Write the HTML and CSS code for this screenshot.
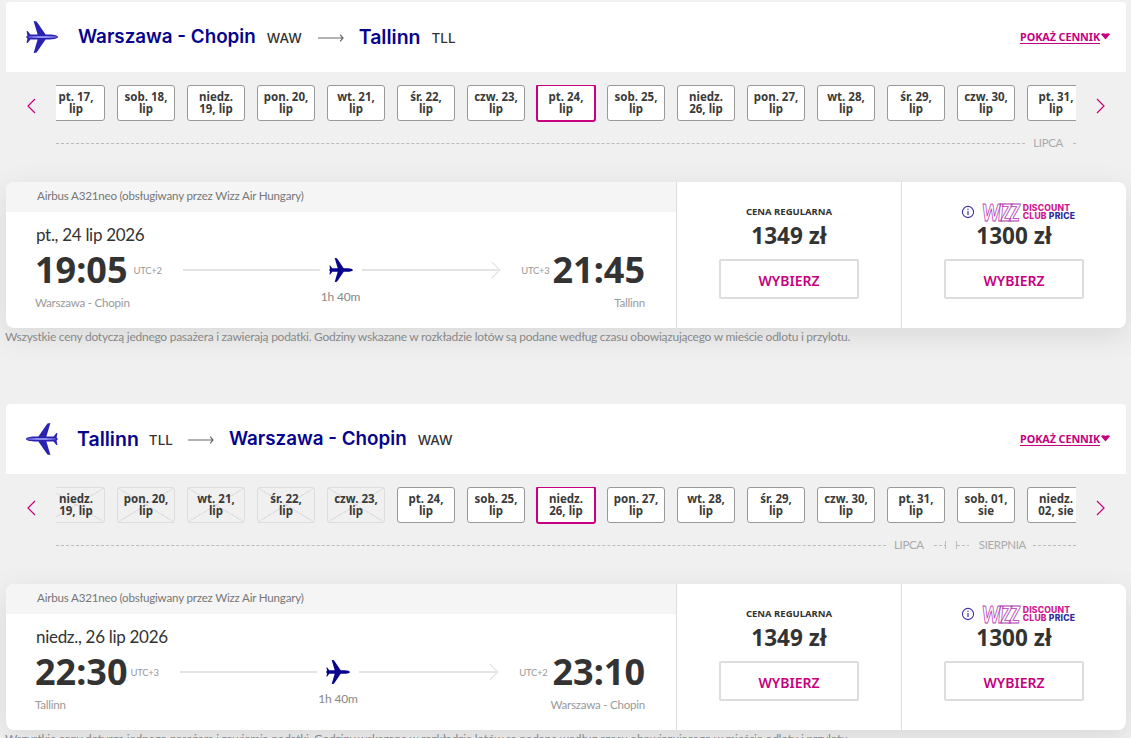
FILE: index.html
```html
<!DOCTYPE html>
<html lang="pl">
<head>
<meta charset="utf-8">
<title>Wizz Air</title>
<link rel="stylesheet" href="styles.css">
</head>
<body>
<svg class="defs" width="0" height="0" aria-hidden="true">
  <defs>
    <path id="plane" d="M32 16C32 14.8 28 13.6 24 13.6L19.6 13.6 10.6 0.4 7.6 0 11.6 13.6 4.4 13.6 1.6 10 0.6 10 1.4 14.4 0 16 1.4 17.6 0.6 22 1.6 22 4.4 18.4 11.6 18.4 7.6 32 10.6 31.6 19.6 18.4 24 18.4C28 18.4 32 17.2 32 16Z"/>
    <symbol id="plane-big" viewBox="0 0 32 32">
      <use href="#plane" fill="#2a22b0"/>
      <path d="M1.5 16C6 14.8 24 14.6 32 16 24 17.4 6 17.2 1.5 16Z" fill="#8f8cf0"/>
    </symbol>
    <symbol id="plane-big-left" viewBox="0 0 32 32">
      <g transform="matrix(-1 0 0 1 32 0)">
        <use href="#plane" fill="#2a22b0"/>
        <path d="M1.5 16C6 14.8 24 14.6 32 16 24 17.4 6 17.2 1.5 16Z" fill="#8f8cf0"/>
      </g>
    </symbol>
    <symbol id="plane-small" viewBox="0 0 32 32"><use href="#plane" fill="#06038d"/></symbol>
    <symbol id="chev-left" viewBox="0 0 10 16"><path d="M9 1 2 8l7 7" fill="none" stroke="#c6007e" stroke-width="1.2"/></symbol>
    <symbol id="chev-right" viewBox="0 0 10 16"><path d="M1 1l7 7-7 7" fill="none" stroke="#c6007e" stroke-width="1.2"/></symbol>
    <symbol id="route-arrow" viewBox="0 0 27 10"><path d="M0 5h26M23 1.5 26 5l-3 3.5" fill="none" stroke="#666" stroke-width="1.2"/></symbol>
    <symbol id="info" viewBox="0 0 14 14"><circle cx="7" cy="7" r="5.6" fill="none" stroke="#3d33a8" stroke-width="1.1"/><path d="M7 6v4M7 3.8v1.2" stroke="#3d33a8" stroke-width="1.2"/></symbol>
    <symbol id="drop" viewBox="0 0 9 7"><path d="M0 1.2C1 -.2 3.4 0 4.5 1 5.6 0 8 -.2 9 1.2L4.5 6.6Z" fill="#c6007e"/></symbol>
  </defs>
</svg>

<section class="leg">
  <header class="leg-head">
    <svg class="head-plane"><use href="#plane-big"/></svg>
    <span class="city">Warszawa - Chopin</span><span class="code">WAW</span>
    <svg class="route-arrow"><use href="#route-arrow"/></svg>
    <span class="city city-short">Tallinn</span><span class="code">TLL</span>
    <a class="fares" href="#"><span class="fares-text">POKAŻ CENNIK</span><svg class="drop"><use href="#drop"/></svg></a>
  </header>
  <div class="date-nav">
    <svg class="chev"><use href="#chev-left"/></svg>
    <div class="date-window">
      <div class="date-track">
        <div class="chip">pt. 17,<br>lip</div>
        <div class="chip">sob. 18,<br>lip</div>
        <div class="chip">niedz.<br>19, lip</div>
        <div class="chip">pon. 20,<br>lip</div>
        <div class="chip">wt. 21,<br>lip</div>
        <div class="chip">śr. 22,<br>lip</div>
        <div class="chip">czw. 23,<br>lip</div>
        <div class="chip chip-on">pt. 24,<br>lip</div>
        <div class="chip">sob. 25,<br>lip</div>
        <div class="chip">niedz.<br>26, lip</div>
        <div class="chip">pon. 27,<br>lip</div>
        <div class="chip">wt. 28,<br>lip</div>
        <div class="chip">śr. 29,<br>lip</div>
        <div class="chip">czw. 30,<br>lip</div>
        <div class="chip">pt. 31,<br>lip</div>
      </div>
      <div class="months">
        <span class="dash dash-fill"></span>
        <span class="month">LIPCA</span>
        <span class="dash dash-end"></span>
      </div>
    </div>
    <svg class="chev"><use href="#chev-right"/></svg>
  </div>
  <article class="card">
    <div class="flight">
      <div class="aircraft">Airbus A321neo (obsługiwany przez Wizz Air Hungary)</div>
      <div class="flight-body">
        <div class="flight-date">pt., 24 lip 2026</div>
        <div class="times">
          <div class="stop">
            <div class="time-row gap-6"><span class="time">19:05</span><span class="utc">UTC+2</span></div>
            <div class="place">Warszawa - Chopin</div>
          </div>
          <div class="mid">
            <div class="mid-row">
              <span class="mid-line"></span>
              <svg class="mid-plane"><use href="#plane-small"/></svg>
              <span class="mid-line mid-arrow"></span>
            </div>
            <div class="duration">1h 40m</div>
          </div>
          <div class="stop stop-end">
            <div class="time-row gap-3"><span class="utc">UTC+3</span><span class="time">21:45</span></div>
            <div class="place">Tallinn</div>
          </div>
        </div>
      </div>
    </div>
    <div class="fare">
      <div class="fare-label">CENA REGULARNA</div>
      <div class="fare-price">1349 zł</div>
      <button class="pick" type="button">WYBIERZ</button>
    </div>
    <div class="fare">
      <div class="fare-label fare-club">
        <svg class="info"><use href="#info"/></svg>
        <span class="wizz">WIZZ</span>
        <span class="club"><span class="club-a">DISCOUNT</span><span class="club-b">CLUB <b>PRICE</b></span></span>
      </div>
      <div class="fare-price">1300 zł</div>
      <button class="pick" type="button">WYBIERZ</button>
    </div>
  </article>
  <p class="note">Wszystkie ceny dotyczą jednego pasażera i zawierają podatki. Godziny wskazane w rozkładzie lotów są podane według czasu obowiązującego w mieście odlotu i przylotu.</p>
</section>

<section class="leg">
  <header class="leg-head">
    <svg class="head-plane head-plane-rev"><use href="#plane-big-left"/></svg>
    <span class="city city-short city-first">Tallinn</span><span class="code">TLL</span>
    <svg class="route-arrow"><use href="#route-arrow"/></svg>
    <span class="city">Warszawa - Chopin</span><span class="code">WAW</span>
    <a class="fares" href="#"><span class="fares-text">POKAŻ CENNIK</span><svg class="drop"><use href="#drop"/></svg></a>
  </header>
  <div class="date-nav">
    <svg class="chev"><use href="#chev-left"/></svg>
    <div class="date-window">
      <div class="date-track">
        <div class="chip chip-off">niedz.<br>19, lip</div>
        <div class="chip chip-off">pon. 20,<br>lip</div>
        <div class="chip chip-off">wt. 21,<br>lip</div>
        <div class="chip chip-off">śr. 22,<br>lip</div>
        <div class="chip chip-off">czw. 23,<br>lip</div>
        <div class="chip">pt. 24,<br>lip</div>
        <div class="chip">sob. 25,<br>lip</div>
        <div class="chip chip-on">niedz.<br>26, lip</div>
        <div class="chip">pon. 27,<br>lip</div>
        <div class="chip">wt. 28,<br>lip</div>
        <div class="chip">śr. 29,<br>lip</div>
        <div class="chip">czw. 30,<br>lip</div>
        <div class="chip">pt. 31,<br>lip</div>
        <div class="chip">sob. 01,<br>sie</div>
        <div class="chip">niedz.<br>02, sie</div>
      </div>
      <div class="months">
        <span class="dash dash-fill"></span>
        <span class="month">LIPCA</span>
        <span class="dash dash-tick-r"></span>
        <span class="dash dash-tick-l"></span>
        <span class="month">SIERPNIA</span>
        <span class="dash dash-tail"></span>
      </div>
    </div>
    <svg class="chev"><use href="#chev-right"/></svg>
  </div>
  <article class="card">
    <div class="flight">
      <div class="aircraft">Airbus A321neo (obsługiwany przez Wizz Air Hungary)</div>
      <div class="flight-body">
        <div class="flight-date">niedz., 26 lip 2026</div>
        <div class="times">
          <div class="stop">
            <div class="time-row gap-3"><span class="time">22:30</span><span class="utc">UTC+3</span></div>
            <div class="place">Tallinn</div>
          </div>
          <div class="mid">
            <div class="mid-row">
              <span class="mid-line"></span>
              <svg class="mid-plane"><use href="#plane-small"/></svg>
              <span class="mid-line mid-arrow"></span>
            </div>
            <div class="duration">1h 40m</div>
          </div>
          <div class="stop stop-end">
            <div class="time-row gap-5"><span class="utc">UTC+2</span><span class="time">23:10</span></div>
            <div class="place">Warszawa - Chopin</div>
          </div>
        </div>
      </div>
    </div>
    <div class="fare">
      <div class="fare-label">CENA REGULARNA</div>
      <div class="fare-price">1349 zł</div>
      <button class="pick" type="button">WYBIERZ</button>
    </div>
    <div class="fare">
      <div class="fare-label fare-club">
        <svg class="info"><use href="#info"/></svg>
        <span class="wizz">WIZZ</span>
        <span class="club"><span class="club-a">DISCOUNT</span><span class="club-b">CLUB <b>PRICE</b></span></span>
      </div>
      <div class="fare-price">1300 zł</div>
      <button class="pick" type="button">WYBIERZ</button>
    </div>
  </article>
  <p class="note">Wszystkie ceny dotyczą jednego pasażera i zawierają podatki. Godziny wskazane w rozkładzie lotów są podane według czasu obowiązującego w mieście odlotu i przylotu.</p>
</section>
</body>
</html>
```

FILE: styles.css
```css
* { box-sizing: border-box; }
html, body { height: 738px; overflow: hidden; }
body {
  margin: 0;
  padding: 2px 5px 0 6px;
  background: #f0f0f0;
  font-family: "Lato", "Liberation Sans", sans-serif;
  color: #333;
}
.defs { position: absolute; }
.leg { height: 402px; }

.leg-head {
  height: 70px;
  background: #fff;
  border-radius: 4px 4px 0 0;
  display: flex;
  align-items: center;
  padding: 0 16px 1px 20px;
}
.head-plane { width: 32px; height: 32px; margin: 1px 20px 0 0; }
.head-plane-rev { margin-right: 19px; }
.city { font-family: "Inter", sans-serif; font-weight: 600; font-size: 18.8px; color: #06038d; margin-right: 11px; }
.city-short { font-size: 19.5px; }
.city-first { margin-right: 10px; }
.code { font-family: "Inter", sans-serif; font-weight: 500; font-size: 13.5px; color: #333; margin-top: 3px; }
.route-arrow { width: 26px; height: 10px; margin: 2px 15px 0 16px; }
.city-first + .code + .route-arrow { margin-left: 15px; }
.fares { margin-left: auto; display: flex; align-items: center; gap: 1px; color: #c6007e; text-decoration: none; font: 700 10.8px "Noto Sans", sans-serif; letter-spacing: -.08px; }
.fares-text { border-bottom: 1px solid #c6007e; line-height: 13px; }
.drop { width: 9px; height: 7px; }

.date-nav { display: flex; height: 110px; padding-top: 13px; }
.chev { width: 10px; height: 16px; margin: 13px 0 0 20px; flex: none; }
.date-nav .chev:first-child { margin-right: 20px; }
.date-nav .chev:last-child { margin-left: 20px; }
.date-window { width: 1020px; flex: none; overflow: hidden; }
.date-track { display: flex; gap: 12px; margin-left: -9px; height: 38px; align-items: flex-start; }
.chip {
  width: 58px; height: 36px; flex: none;
  background: #fff;
  border: 1px solid #999;
  border-radius: 3px;
  font: 700 11.5px/12px "Noto Sans", sans-serif;
  color: #3a3a3a;
  text-align: center;
  display: flex; align-items: center; justify-content: center;
}
.chip-on {
  width: 60px; height: 38px;
  margin: -1px -1px 0;
  border: 2px solid #c6007e;
}
.chip-off {
  background:
    linear-gradient(to top right, transparent calc(50% - .5px), #ddd calc(50% - .5px), #ddd calc(50% + .5px), transparent calc(50% + .5px)),
    linear-gradient(to bottom right, transparent calc(50% - .5px), #ddd calc(50% - .5px), #ddd calc(50% + .5px), transparent calc(50% + .5px));
  border-color: #ddd;
}
.months { display: flex; align-items: center; height: 14px; margin-top: 13px; }
.dash { height: 0; border-top: 1px dashed #bbb; }
.dash-fill { flex: 1; }
.dash-end { width: 3px; margin-left: 10px; }
.dash-tick-r { width: 12px; height: 8px; margin: 0 10px 0 10px; border-top: 0; border-right: 1px solid #bbb; background: repeating-linear-gradient(to right, #bbb 0 3px, transparent 3px 5px) 0 50%/100% 1px no-repeat; }
.dash-tick-l { width: 13px; height: 8px; margin: 0 10px 0 0; border-top: 0; border-left: 1px solid #bbb; background: repeating-linear-gradient(to right, #bbb 0 3px, transparent 3px 5px) 0 50%/100% 1px no-repeat; }
.dash-tail { width: 43px; margin-left: 7px; }
.month { font-size: 11.5px; letter-spacing: -.35px; color: #aaa; margin-left: 8px; line-height: 14px; }
.dash-tick-l + .month { margin-left: 0; }

.card {
  height: 146px;
  background: #fff;
  border-radius: 8px;
  box-shadow: 0 8px 30px rgba(0,0,0,.1);
  display: flex;
  overflow: hidden;
}
.flight { width: 670px; flex: none; }
.aircraft { height: 30px; background: #f5f5f5; padding: 0 0 0 31px; font-size: 11.6px; letter-spacing: -.2px; line-height: 28px; color: #777; }
.flight-body { padding: 13px 30px 0; }
.flight-date { font-size: 17px; letter-spacing: -.3px; line-height: 20px; color: #333; }
.times { display: flex; gap: 21px; margin: 7px 1px 0 -1px; }
.stop { flex: none; }
.stop-end { text-align: right; }
.time-row { display: flex; align-items: center; height: 36px; }
.gap-3 { gap: 3px; }
.gap-5 { gap: 5px; }
.gap-6 { gap: 6px; }
.stop-end .time-row { justify-content: flex-end; }
.time { font: 700 36px/36px "Noto Sans", sans-serif; color: #333; }
.utc { font-size: 9.5px; letter-spacing: -.3px; color: #999; }
.place { font-size: 11.6px; letter-spacing: -.25px; line-height: 16px; color: #999; margin-top: 7px; }
.mid { flex: 1; margin-right: 2px; }
.mid-row { display: flex; align-items: center; height: 36px; gap: 9px; }
.mid-line { flex: 1; height: 2px; background: #e4e4e4; position: relative; }
.mid-arrow::after {
  content: "";
  position: absolute; right: 0; top: -5px;
  width: 11px; height: 11px;
  border-top: 1.5px solid #e0e0e0; border-right: 1.5px solid #e0e0e0;
  transform: rotate(45deg);
  transform-origin: center;
}
.mid-plane { width: 24px; height: 24px; flex: none; }
.duration { text-align: center; font-size: 12px; letter-spacing: -.2px; line-height: 14px; color: #888; margin-top: 2px; }

.fare {
  flex: 1;
  border-left: 1px solid #ddd;
  display: flex; flex-direction: column; align-items: center;
  padding-top: 22px;
}
.fare-label { height: 16px; font: 700 9.5px/16px "Noto Sans", sans-serif; color: #333; display: flex; align-items: center; white-space: nowrap; }
.fare-club { margin-left: 8px; }
.info { width: 14px; height: 14px; margin-right: 7px; }
.wizz {
  display: inline-block;
  width: 41px;
  font: italic 900 23px/16px "Lato", sans-serif;
  letter-spacing: -2.5px;
  color: #fff;
  -webkit-text-stroke: .9px #b43cb4;
  transform: scaleX(.8);
  transform-origin: left center;
}
.club { display: flex; flex-direction: column; font: 800 8.6px/8px "Inter", sans-serif; color: #d0178f; letter-spacing: .2px; }
.club-a, .club-b { display: block; }
.club-b b { color: #2c2a9c; font-weight: 800; }
.fare-price { font: 700 22.5px/26px "Noto Sans", sans-serif; color: #333; margin-top: 3px; }
.pick {
  width: 140px; height: 40px;
  margin-top: 10px;
  padding: 2px 0 0;
  background: #fff;
  border: 2px solid #ddd;
  border-radius: 2px;
  color: #c6007e;
  font: 600 14px "Noto Sans", sans-serif;
}
.note { margin: 1px 0 0 -1px; font-size: 12px; letter-spacing: -.26px; line-height: 16px; color: #888; white-space: nowrap; }
```
